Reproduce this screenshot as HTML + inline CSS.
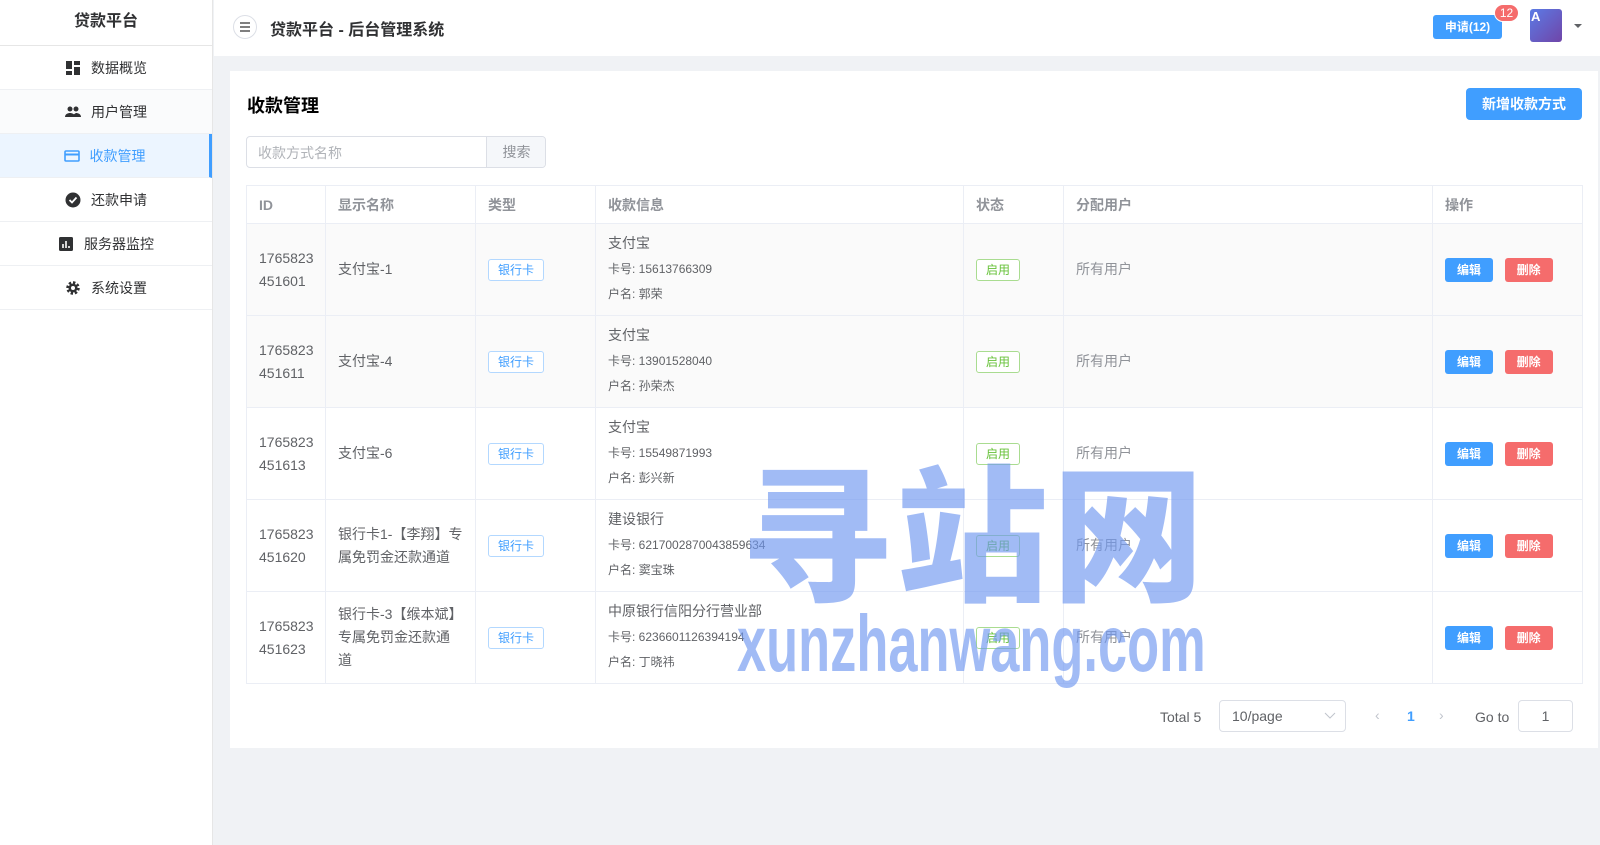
<!DOCTYPE html>
<html><head><meta charset="utf-8"><style>
*{box-sizing:border-box;margin:0;padding:0}
body{width:1600px;height:845px;overflow:hidden;background:#f0f2f5;font-family:"Liberation Sans","Noto Sans CJK SC",sans-serif;color:#606266;position:relative}
.side{position:absolute;left:0;top:0;width:213px;height:845px;background:#fff;border-right:1px solid #e6e6e6}
.logo{height:46px;border-bottom:1px solid #e6e6e6;text-align:center;line-height:44px;font-weight:bold;font-size:16px;color:#303133}
.mi{height:44px;border-bottom:1px solid #eef0f3;display:flex;align-items:center;justify-content:center;font-size:14px;color:#303133;gap:10px}
.mi svg{width:16px;height:16px}
.mi.act{background:#ecf5ff;color:#409eff;border-right:3px solid #409eff}
.mi.hov{background:#fafbfc}
.hdr{position:absolute;left:214px;top:0;right:0;height:56px;background:#fff}
.card{position:absolute;left:230px;top:71px;width:1368px;height:677px;background:#fff}
.abs{position:absolute}
table{position:absolute;left:16px;top:114px;border-collapse:collapse;table-layout:fixed;width:1336px}
td,th{border:1px solid #ebeef5;padding:0 12px;font-size:14px;text-align:left;vertical-align:middle}
th{height:38px;color:#909399;font-weight:bold}
td{height:92px;line-height:23px}
.tag{display:inline-block;height:22px;line-height:20px;padding:0 9px;font-size:12px;border:1px solid #b3d8ff;color:#409eff;background:#fff;border-radius:3px}
.tg{border-color:#a9dc90;color:#67c23a;background:#fff}
.b{display:inline-block;width:48px;height:24px;line-height:24px;text-align:center;color:#fff;font-size:12px;font-weight:bold;border-radius:3px}
.s{font-size:12px;line-height:25px}
.i1{margin-bottom:2px}
</style></head><body>
<div class="side">
<div class="logo">贷款平台</div>
<div class="mi"><svg viewBox="0 0 16 16"><path d="M1 1h6v8H1zM9 1h6v4H9zM9 7h6v8H9zM1 11h6v4H1z" fill="#303133"/></svg>数据概览</div>
<div class="mi hov"><svg viewBox="0 0 16 16"><circle cx="5" cy="5" r="2.5" fill="#303133"/><circle cx="11" cy="5" r="2.5" fill="#303133"/><path d="M0 13c0-3 3-4 5-4s5 1 5 4zM8 13c0-2 1-3 3-4 2 0 5 1 5 4z" fill="#303133"/></svg>用户管理</div>
<div class="mi act"><svg viewBox="0 0 16 16"><rect x="1" y="3" width="14" height="10" rx="1" fill="none" stroke="#409eff" stroke-width="1.6"/><path d="M1 6.5h14" stroke="#409eff" stroke-width="2"/></svg>收款管理</div>
<div class="mi"><svg viewBox="0 0 16 16"><circle cx="8" cy="8" r="7.5" fill="#303133"/><path d="M4.5 8l2.5 2.5 4.5-5" stroke="#fff" stroke-width="1.8" fill="none"/></svg>还款申请</div>
<div class="mi"><svg viewBox="0 0 16 16"><rect x="1" y="1" width="14" height="14" rx="1.5" fill="#303133"/><path d="M5 12V8M8 12V5M11 12v-2" stroke="#fff" stroke-width="1.6"/></svg>服务器监控</div>
<div class="mi"><svg viewBox="0 0 16 16"><circle cx="8" cy="8" r="5" fill="none" stroke="#303133" stroke-width="3.5" stroke-dasharray="2.2 1.7"/><circle cx="8" cy="8" r="4.5" fill="#303133"/><circle cx="8" cy="8" r="2" fill="#fff"/></svg>系统设置</div>
</div>
<div class="hdr">
<div class="abs" style="left:19px;top:15px;width:24px;height:24px;border:1px solid #dcdfe6;border-radius:50%"><svg width="22" height="22" viewBox="0 0 22 22"><path d="M6 7h10M6 11h10M6 15h10" stroke="#555" stroke-width="1.6"/></svg></div>
<div class="abs" style="left:56px;top:16px;font-size:16px;font-weight:bold;color:#303133">贷款平台 - 后台管理系统</div>
<div class="abs" style="left:1219px;top:15px;width:69px;height:24px;background:#409eff;color:#fff;border-radius:3px;font-size:12px;font-weight:bold;text-align:center;line-height:24px">申请(12)</div>
<div class="abs" style="left:1280px;top:4px;width:25px;height:18px;background:#f56c6c;color:#fff;border-radius:9px;border:1px solid #fff;font-size:12px;text-align:center;line-height:16px">12</div>
<div class="abs" style="left:1316px;top:9px;width:32px;height:33px;border-radius:3px;background:linear-gradient(135deg,#5b7be6,#7045a8);color:#fff;font-size:13px;font-weight:bold;padding-left:1px;line-height:16px">A</div>
<div class="abs" style="left:1360px;top:24px;width:0;height:0;border-left:4px solid transparent;border-right:4px solid transparent;border-top:4px solid #606266"></div>
</div>
<div class="card">
<div class="abs" style="left:17px;top:21px;font-size:18px;font-weight:bold;color:#000">收款管理</div>
<div class="abs" style="left:1236px;top:17px;width:116px;height:32px;background:#409eff;border-radius:4px;color:#fff;font-size:14px;font-weight:bold;text-align:center;line-height:32px">新增收款方式</div>
<div class="abs" style="left:16px;top:65px;width:300px;height:32px;border:1px solid #dcdfe6;border-radius:4px;overflow:hidden;font-size:14px">
<div class="abs" style="left:11px;top:6px;color:#b0b3b8">收款方式名称</div>
<div class="abs" style="left:239px;top:0;width:60px;height:30px;background:#f5f7fa;border-left:1px solid #dcdfe6;text-align:center;line-height:30px;color:#909399">搜索</div>
</div>
<table>
<colgroup><col style="width:79px"><col style="width:150px"><col style="width:120px"><col style="width:368px"><col style="width:100px"><col style="width:369px"><col style="width:150px"></colgroup>
<tr><th>ID</th><th>显示名称</th><th>类型</th><th>收款信息</th><th>状态</th><th>分配用户</th><th>操作</th></tr>
<tr style="background:#fafafa"><td>1765823<br>451601</td><td>支付宝-1</td><td><span class="tag">银行卡</span></td><td><div class="i1">支付宝</div><div class="s">卡号: 15613766309</div><div class="s">户名: 郭荣</div></td><td><span class="tag tg">启用</span></td><td style="color:#909399">所有用户</td><td><span class="b" style="background:#409eff">编辑</span>&nbsp;&nbsp;&nbsp;<span class="b" style="background:#f56c6c">删除</span></td></tr>
<tr style="background:#fafafa"><td>1765823<br>451611</td><td>支付宝-4</td><td><span class="tag">银行卡</span></td><td><div class="i1">支付宝</div><div class="s">卡号: 13901528040</div><div class="s">户名: 孙荣杰</div></td><td><span class="tag tg">启用</span></td><td style="color:#909399">所有用户</td><td><span class="b" style="background:#409eff">编辑</span>&nbsp;&nbsp;&nbsp;<span class="b" style="background:#f56c6c">删除</span></td></tr>
<tr><td>1765823<br>451613</td><td>支付宝-6</td><td><span class="tag">银行卡</span></td><td><div class="i1">支付宝</div><div class="s">卡号: 15549871993</div><div class="s">户名: 彭兴新</div></td><td><span class="tag tg">启用</span></td><td style="color:#909399">所有用户</td><td><span class="b" style="background:#409eff">编辑</span>&nbsp;&nbsp;&nbsp;<span class="b" style="background:#f56c6c">删除</span></td></tr>
<tr><td>1765823<br>451620</td><td>银行卡1-【李翔】专属免罚金还款通道</td><td><span class="tag">银行卡</span></td><td><div class="i1">建设银行</div><div class="s">卡号: 6217002870043859634</div><div class="s">户名: 窦宝珠</div></td><td><span class="tag tg">启用</span></td><td style="color:#909399">所有用户</td><td><span class="b" style="background:#409eff">编辑</span>&nbsp;&nbsp;&nbsp;<span class="b" style="background:#f56c6c">删除</span></td></tr>
<tr><td>1765823<br>451623</td><td>银行卡-3【缑本斌】专属免罚金还款通道</td><td><span class="tag">银行卡</span></td><td><div class="i1">中原银行信阳分行营业部</div><div class="s">卡号: 6236601126394194</div><div class="s">户名: 丁晓祎</div></td><td><span class="tag tg">启用</span></td><td style="color:#909399">所有用户</td><td><span class="b" style="background:#409eff">编辑</span>&nbsp;&nbsp;&nbsp;<span class="b" style="background:#f56c6c">删除</span></td></tr>
</table>
<div class="abs" style="left:930px;top:638px;font-size:14px">Total 5</div>
<div class="abs" style="left:989px;top:629px;width:127px;height:32px;border:1px solid #dcdfe6;border-radius:4px;font-size:14px;padding:7px 12px">10/page<svg class="abs" style="left:104px;top:11px" width="12" height="8" viewBox="0 0 12 8"><path d="M1 1l5 5 5-5" stroke="#c0c4cc" fill="none"/></svg></div>
<div class="abs" style="left:1145px;top:636px;color:#c0c4cc;font-size:14px">‹</div>
<div class="abs" style="left:1177px;top:637px;color:#409eff;font-size:14px;font-weight:bold">1</div>
<div class="abs" style="left:1209px;top:636px;color:#c0c4cc;font-size:14px">›</div>
<div class="abs" style="left:1245px;top:638px;font-size:14px">Go to</div>
<div class="abs" style="left:1288px;top:629px;width:55px;height:32px;border:1px solid #dcdfe6;border-radius:4px;text-align:center;line-height:30px;font-size:14px">1</div>
</div>
<div class="abs" style="left:740px;top:452px;font-size:152px;font-weight:900;color:rgba(110,150,240,0.65);letter-spacing:4px;line-height:1;font-family:'Noto Sans CJK SC',sans-serif;transform:scaleY(0.97);transform-origin:left top">寻站网</div>
<div class="abs" style="left:737px;top:604px;font-size:80px;font-weight:bold;color:rgba(110,150,240,0.65);line-height:1;transform:scaleX(0.655);transform-origin:left top;font-family:'Liberation Sans',sans-serif">xunzhanwang.com</div>
</body></html>
